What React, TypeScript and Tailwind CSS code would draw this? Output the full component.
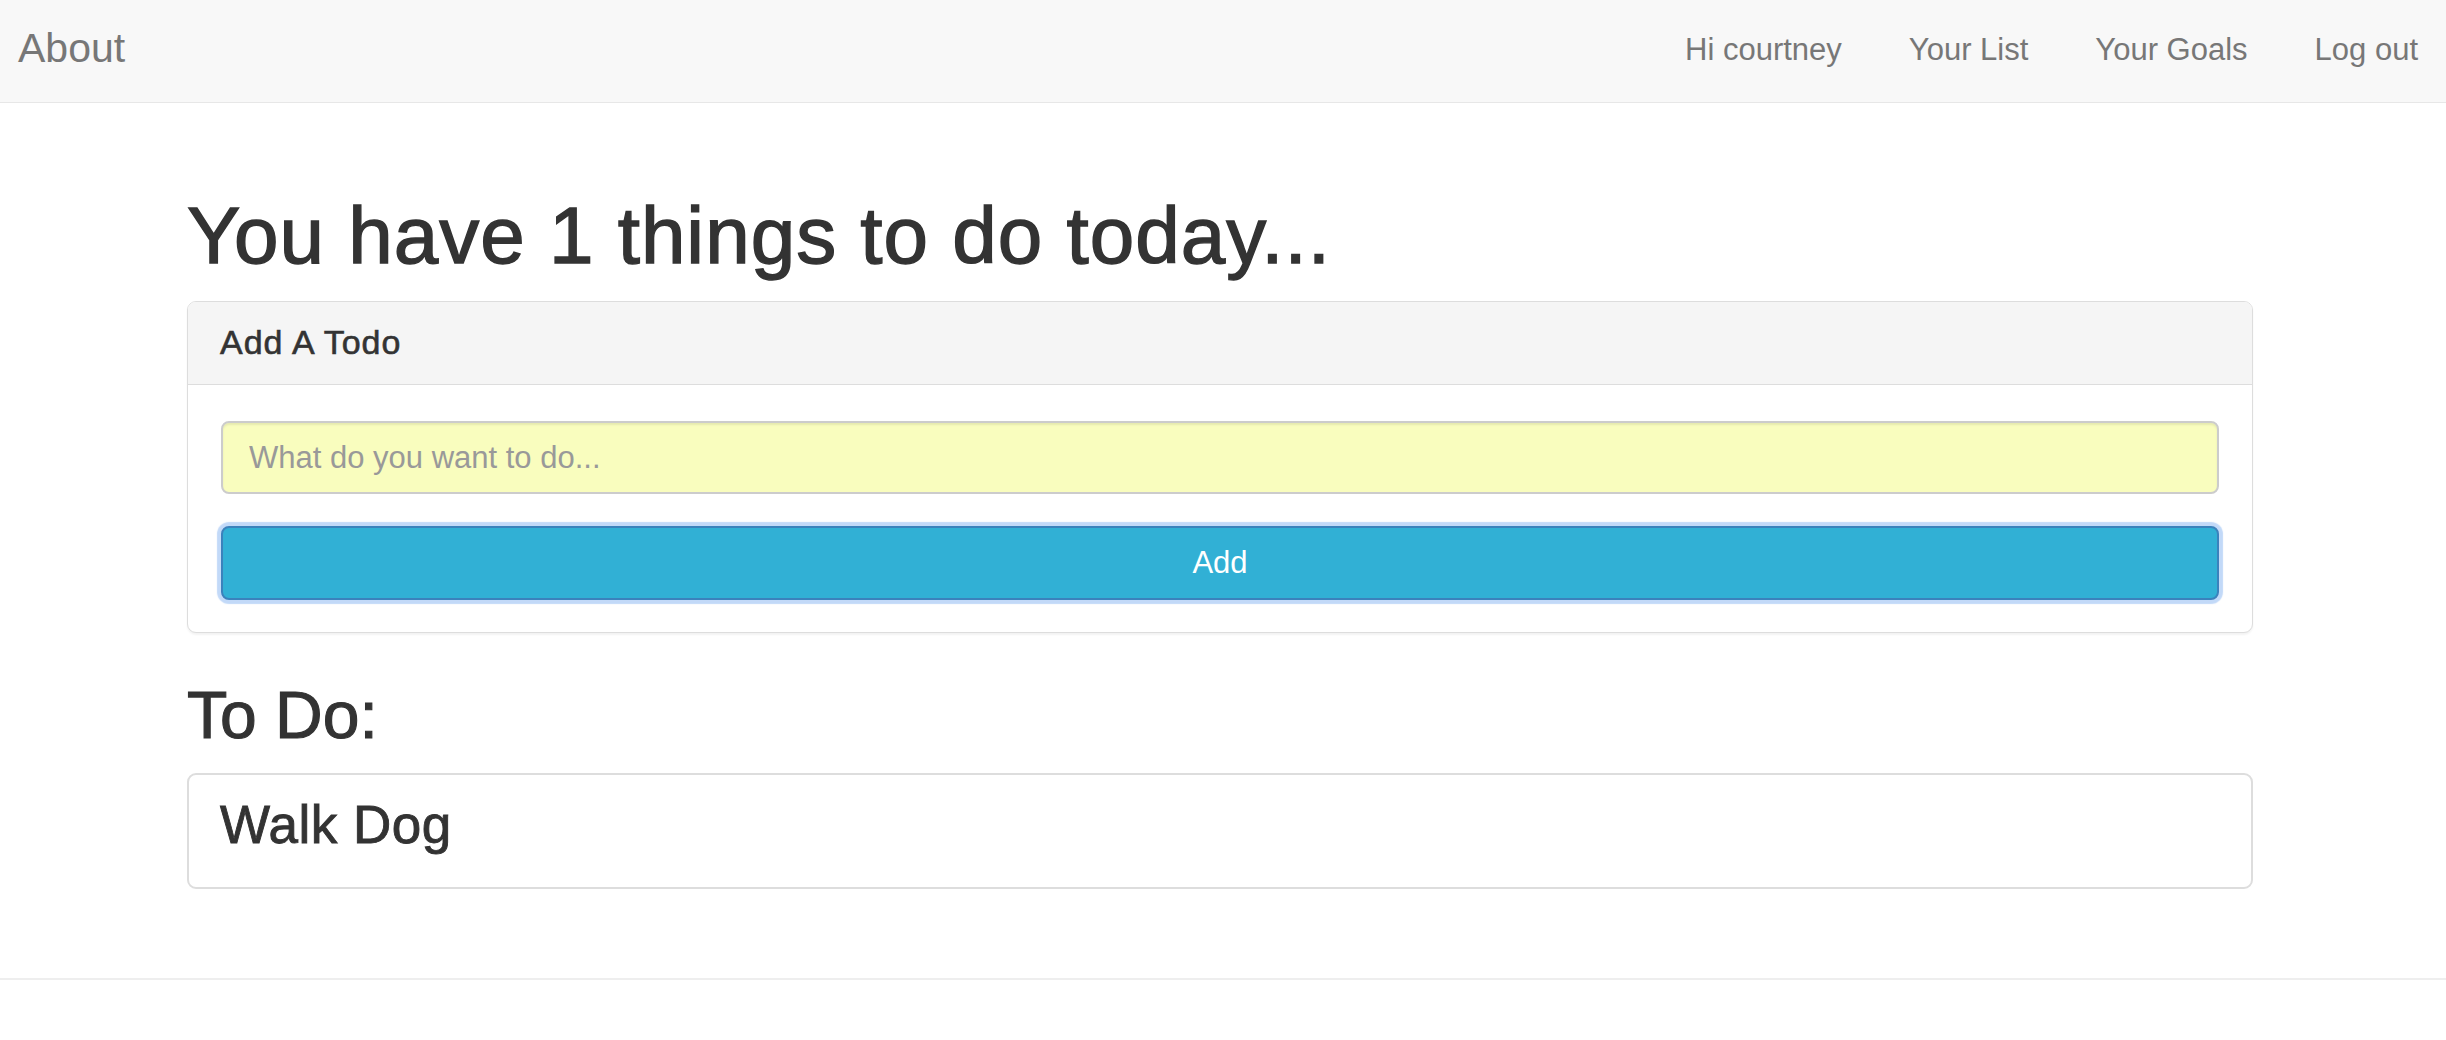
import { useState } from "react";

function NavBar() {
  const links = ["Hi courtney", "Your List", "Your Goals", "Log out"];

  return (
    <nav className="h-[103px] bg-[#f8f8f8] border-b border-[#e7e7e7] flex items-start justify-between">
      <a href="#" className="ml-[18px] mt-[26px] text-[41px] leading-[1.1] text-[#777]">
        About
      </a>
      <ul className="flex gap-[67px] pr-[28px] mt-[33px]">
        {links.map((label) => (
          <li key={label}>
            <a href="#" className="text-[31px] leading-[1.1] text-[#777]">
              {label}
            </a>
          </li>
        ))}
      </ul>
    </nav>
  );
}

function AddTodoPanel() {
  const [text, setText] = useState("");

  return (
    <div className="mt-[21px] border border-[#ddd] rounded-[9px] bg-white shadow-[0_2px_2px_rgba(0,0,0,0.05)]">
      <div className="h-[83px] flex items-center px-[32px] bg-[#f5f5f5] border-b border-[#ddd] rounded-t-[8px]">
        <h3 className="text-[34px] leading-[1.1] tracking-[1px] text-[#333] [-webkit-text-stroke:0.6px_#333]">
          Add A Todo
        </h3>
      </div>
      <div className="px-[33px] pt-[36px] pb-[32px] flex flex-col gap-[32px]">
        <input
          value={text}
          onChange={(e) => setText(e.target.value)}
          placeholder="What do you want to do..."
          className="h-[73px] w-full rounded-[8px] border-2 border-[#ccc] bg-[#f9fdbe] px-[26px] text-[31px] text-[#555] placeholder:text-[#999] shadow-[inset_0_2px_2px_rgba(0,0,0,0.075)] outline-none"
        />
        <button className="h-[74px] w-full rounded-[8px] border-2 border-[#3b82bc] bg-[#31b0d5] text-[31px] text-white shadow-[0_0_1px_4px_rgba(120,170,240,0.45)]">
          Add
        </button>
      </div>
    </div>
  );
}

export default function App() {
  return (
    <div className="min-h-screen bg-white font-['Liberation_Sans',Arial,sans-serif] text-[#333]">
      <NavBar />
      <main className="ml-[187px] w-[2066px]">
        <h1 className="mt-[89px] text-[80px] leading-[1.1] tracking-[1px] text-[#333] [-webkit-text-stroke:1.4px_#333]">
          You have 1 things to do today...
        </h1>
        <AddTodoPanel />
        <h2 className="mt-[46px] text-[66px] leading-[1.1] text-[#333] [-webkit-text-stroke:1.1px_#333]">
          To Do:
        </h2>
        <div className="mt-[21px] h-[116px] border-2 border-[#ddd] rounded-[9px] pl-[31px] pt-[21px]">
          <h3 className="text-[53px] leading-[1.1] tracking-[0.5px] text-[#333] [-webkit-text-stroke:0.9px_#333]">
            Walk Dog
          </h3>
        </div>
      </main>
      <footer className="mt-[89px] border-t-2 border-[#eee] h-[62px]" />
    </div>
  );
}
